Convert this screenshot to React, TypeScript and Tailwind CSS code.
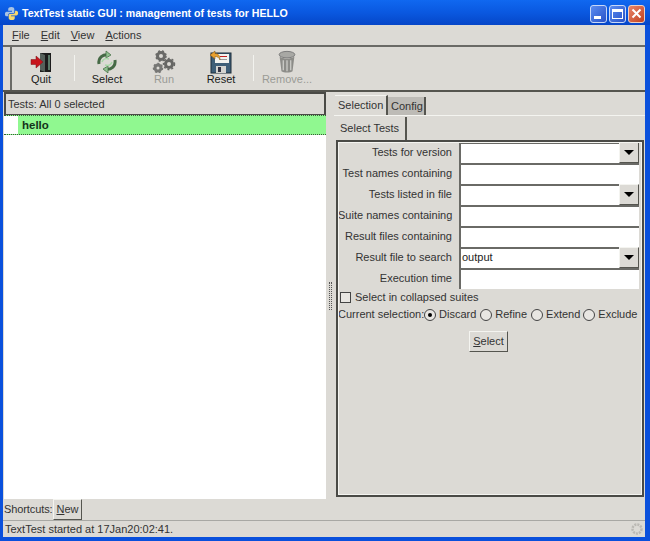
import type { ReactNode } from "react";

function Underlined({ first, rest }: { first: string; rest: string }) {
  return (
    <span>
      <span className="underline">{first}</span>
      {rest}
    </span>
  );
}

function PythonIcon() {
  return (
    <svg width="15" height="15" viewBox="0 0 16 16">
      <path d="M8 1C5 1 4.500 2 4.500 3.500V5H8.500V6H3C1.500 6 1 7 1 8.500S1.500 11 3 11H4.500V9.500C4.500 8.300 5.300 7.800 6.500 7.800H9.500C10.500 7.800 11 7.200 11 6.300V3.300C11 1.800 9.800 1 8 1Z" fill="#a9c4e4" />
      <path d="M8 15C11 15 11.500 14 11.500 12.500V11H7.500V10H13C14.500 10 15 9 15 7.500S14.500 5 13 5H11.800V6.500C11.800 7.800 10.800 8.600 9.500 8.600H6.500C5.500 8.600 5 9.200 5 10V12.700C5 14.200 6.200 15 8 15Z" fill="#f5d76e" />
    </svg>
  );
}

function WindowButtons() {
  return (
    <div className="flex gap-[2px] pr-[5px]">
      <div className="w-[17px] h-[18px] rounded-[3px] border border-[#c8d8f8] bg-gradient-to-br from-[#5b8cf0] to-[#2a52c8] flex items-end pl-[3px] pb-[3px]">
        <div className="w-[7px] h-[3px] bg-white" />
      </div>
      <div className="w-[17px] h-[18px] rounded-[3px] border border-[#c8d8f8] bg-gradient-to-br from-[#5b8cf0] to-[#2a52c8] flex items-center justify-center">
        <div className="w-[11px] h-[10px] border border-white border-t-[3px]" />
      </div>
      <div className="w-[17px] h-[18px] rounded-[3px] border border-[#f0d0c0] bg-gradient-to-br from-[#e88468] to-[#c2401c] flex items-center justify-center">
        <svg width="11" height="11" viewBox="0 0 11 11">
          <path d="M1.500 1.500L9.500 9.500M9.500 1.500L1.500 9.500" stroke="white" strokeWidth="2" />
        </svg>
      </div>
    </div>
  );
}

function QuitIcon() {
  return (
    <svg width="22" height="22" viewBox="0 0 22 22">
      <rect x="10" y="2" width="11" height="19" fill="#1c1c1c" />
      <path d="M10 2L15 4V21L10 19Z" fill="#55605a" />
      <rect x="18" y="4" width="2" height="15" fill="#5a7a68" />
      <path d="M1 8.500H6V5L13 11L6 17V13.500H1Z" fill="#c8141c" stroke="#7a1014" strokeWidth="0.5" />
    </svg>
  );
}

function SelectIcon() {
  return (
    <svg width="24" height="24" viewBox="0 0 24 24" fill="none">
      <path d="M4 14C3 8 8 3.500 14 5" stroke="#466a46" strokeWidth="3" />
      <path d="M11 1L16 5L11 8Z" fill="#8fbf8f" stroke="#3f6b3f" strokeWidth="0.7" />
      <path d="M20 10C21 16 16 20.500 10 19" stroke="#466a46" strokeWidth="3" />
      <path d="M13 23L8 19L13 16Z" fill="#8fbf8f" stroke="#3f6b3f" strokeWidth="0.7" />
      <path d="M7 12C8 9 11 8 14 9" stroke="#a8d8a8" strokeWidth="1.500" />
      <path d="M17 12C16 15 13 16 10 15" stroke="#a8d8a8" strokeWidth="1.500" />
    </svg>
  );
}

function RunIcon() {
  return (
    <svg width="24" height="24" viewBox="0 0 24 24" fill="none">
      <circle cx="9" cy="6" r="3.500" stroke="#6a6a68" strokeWidth="3" />
      <circle cx="9" cy="6" r="5" stroke="#6a6a68" strokeWidth="1.500" strokeDasharray="2 2" />
      <circle cx="17" cy="14" r="3.500" stroke="#666664" strokeWidth="3" />
      <circle cx="17" cy="14" r="5.500" stroke="#666664" strokeWidth="1.500" strokeDasharray="2 2" />
      <circle cx="6" cy="18" r="3" stroke="#777775" strokeWidth="3" />
      <circle cx="6" cy="18" r="4.500" stroke="#777775" strokeWidth="1.500" strokeDasharray="2 2" />
    </svg>
  );
}

function ResetIcon() {
  return (
    <svg width="24" height="24" viewBox="0 0 24 24">
      <rect x="2" y="3" width="20" height="20" fill="#3f5f78" stroke="#1c2c3a" />
      <rect x="6" y="4" width="14" height="9" fill="#f2f2ee" />
      <rect x="11" y="6" width="7" height="1" fill="#c02020" />
      <rect x="11" y="9" width="7" height="1" fill="#999" />
      <rect x="7" y="16" width="10" height="7" fill="#d4d4d0" />
      <rect x="9" y="17" width="3" height="5" fill="#334" />
      <path d="M1 5L6 1V3.500C9 3.500 11 5 11 10C10 7.500 8.500 6.500 6 6.500V9Z" fill="#e8a030" stroke="#7a5010" strokeWidth="0.5" />
    </svg>
  );
}

function RemoveIcon() {
  return (
    <svg width="22" height="24" viewBox="0 0 22 26">
      <ellipse cx="11" cy="5" rx="8.500" ry="3.500" fill="#a8a8a4" stroke="#777" />
      <path d="M3 7L5 23C7 25 15 25 17 23L19 7C15 10 7 10 3 7Z" fill="#8c8c88" />
      <path d="M7 11V22M11 11V23M15 11V22" stroke="#c8c8c4" strokeWidth="1.500" />
    </svg>
  );
}

function ToolButton({ icon, label, disabled, width }: { icon: ReactNode; label: string; disabled?: boolean; width: string }) {
  return (
    <div className={`flex flex-col items-center ${width}`}>
      <div className="h-[24px] flex items-center justify-center">{icon}</div>
      <div className={`-mt-[2px] leading-[14px] ${disabled ? "text-[#9a9a96]" : "text-[#1a1a1a]"}`}>{label}</div>
    </div>
  );
}

function Entry({ value, combo }: { value?: string; combo?: boolean }) {
  return (
    <div className="flex w-[180px] h-[21px]">
      <div className="flex-1 bg-white border-t-2 border-l-2 border-t-[#6a6a66] border-l-[#6a6a66] pl-[1px] leading-[17px]">{value}</div>
      {combo && (
        <div className="w-[20px] bg-[#dcdad5] border border-[#55554f] border-t-[#f4f4f0] border-l-[#f4f4f0] flex items-center justify-center">
          <div className="w-0 h-0 border-x-[5px] border-x-transparent border-t-[5px] border-t-black" />
        </div>
      )}
    </div>
  );
}

function Row({ label, value, combo }: { label: string; value?: string; combo?: boolean }) {
  return (
    <div className="flex items-center h-[21px]">
      <div className="w-[114px] text-right text-[#333] whitespace-nowrap">{label}</div>
      <div className="ml-[7px]">
        <Entry value={value} combo={combo} />
      </div>
    </div>
  );
}

function Radio({ label, on, gap }: { label: string; on?: boolean; gap: string }) {
  return (
    <div className={`flex items-center ${gap}`}>
      <div className="w-[12px] h-[12px] rounded-full border border-[#444] bg-[#e8e6e2] flex items-center justify-center">
        {on && <div className="w-[4px] h-[4px] rounded-full bg-black" />}
      </div>
      <span className="ml-[3px] text-[#333]">{label}</span>
    </div>
  );
}

export default function App() {
  return (
    <div className="w-[650px] h-[541px] flex flex-col bg-[#0a50dc] font-['Liberation_Sans',Arial,sans-serif] text-[11px] text-[#222] overflow-hidden">
      {/* title bar */}
      <div className="h-[25px] shrink-0 bg-gradient-to-b from-[#1068f0] via-[#0a58e0] to-[#0646c8] flex items-center justify-between pl-[4px] pt-[2px]">
        <div className="flex items-center gap-[3px]">
          <PythonIcon />
          <span className="text-white font-bold text-[10.6px]">TextTest static GUI : management of tests for HELLO</span>
        </div>
        <WindowButtons />
      </div>

      <div className="flex-1 min-h-0 ml-[3px] mb-[4px] mr-[5px] bg-[#dcdad5] flex flex-col">
        {/* menu */}
        <div className="h-[22px] shrink-0 flex items-center gap-[11px] pl-[9px] pt-[1px] border-b-2 border-[#6a6a66] text-[#333]">
          <Underlined first="F" rest="ile" />
          <Underlined first="E" rest="dit" />
          <Underlined first="V" rest="iew" />
          <Underlined first="A" rest="ctions" />
        </div>

        {/* toolbar */}
        <div className="h-[45px] shrink-0 flex items-center border-b-2 border-[#55554f]">
          <div className="w-[2px] h-full bg-[#6a6a66] ml-[7px]" />
          <div className="flex items-center h-full pb-[2px]">
            <ToolButton icon={<QuitIcon />} label="Quit" width="w-[56px] ml-[1px]" />
            <div className="w-[1px] h-[26px] bg-[#f2f2ee] ml-[5px] mr-[3px]" />
            <ToolButton icon={<SelectIcon />} label="Select" width="w-[58px]" />
            <ToolButton icon={<RunIcon />} label="Run" disabled width="w-[56px]" />
            <ToolButton icon={<ResetIcon />} label="Reset" width="w-[58px]" />
            <div className="w-[1px] h-[26px] bg-[#f2f2ee] ml-[3px] mr-[4px]" />
            <ToolButton icon={<RemoveIcon />} label="Remove..." disabled width="w-[52px] ml-[3px]" />
          </div>
        </div>

        {/* panes */}
        <div className="flex-1 min-h-0 flex">
          <div className="w-[323px] shrink-0 flex flex-col pl-[1px]">
            <div className="h-[23px] shrink-0 border-2 border-[#4a4a46] border-b flex items-center pl-[2px] text-[#333]">Tests: All 0 selected</div>
            <div className="flex-1 bg-white">
              <div className="h-[20px] flex bg-[#90f890] border-y border-dotted border-[#3a5a3a]">
                <div className="w-[14px] bg-white" />
                <div className="pl-[4px] font-bold text-[11.5px] text-[#14331a] leading-[18px]">hello</div>
              </div>
            </div>
          </div>

          {/* splitter grip */}
          <div className="w-[8px] shrink-0 flex items-center justify-center">
            <div className="w-[3px] h-[28px] border-x border-dotted border-[#555]" />
          </div>

          <div className="flex-1 min-w-0 flex flex-col pt-[3px]">
            {/* tabs */}
            <div className="h-[20px] shrink-0 flex items-end">
              <div className="h-[20px] w-[53px] ml-[1px] border-r-2 border-[#55554f] border-t border-t-[#f4f4f0] flex items-center pl-[3px] text-[#333]">Selection</div>
              <div className="h-[18px] w-[38px] bg-[#bdbbb6] border-r-2 border-[#55554f] flex items-center pl-[3px] text-[#333]">Config</div>
            </div>
            <div className="flex-1 min-h-0 flex flex-col border-t border-[#f4f4f0] pl-[2px] pr-[1px] pb-[2px]">
              <div className="h-[24px] shrink-0 flex">
                <div className="w-[70px] ml-[1px] mt-[1px] border-r-2 border-[#55554f] flex items-center pl-[3px] text-[#333]">Select Tests</div>
              </div>
              {/* form frame */}
              <div className="flex-1 min-h-0 border-2 border-[#4a4a46] outline outline-1 outline-[#f4f4f0] -outline-offset-[3px]">
                <Row label="Tests for version" combo />
                <Row label="Test names containing" />
                <Row label="Tests listed in file" combo />
                <Row label="Suite names containing" />
                <Row label="Result files containing" />
                <Row label="Result file to search" value="output" combo />
                <Row label="Execution time" />
                <div className="h-[17px] flex items-center pl-[2px]">
                  <div className="w-[11px] h-[11px] border border-[#444] bg-[#e8e6e2]" />
                  <span className="ml-[4px] text-[#333]">Select in collapsed suites</span>
                </div>
                <div className="h-[17px] flex items-center whitespace-nowrap text-[#333]">
                  <span className="w-[85px]">Current selection:</span>
                  <Radio label="Discard" on gap="ml-[1px]" />
                  <Radio label="Refine" gap="ml-[4px]" />
                  <Radio label="Extend" gap="ml-[4px]" />
                  <Radio label="Exclude" gap="ml-[3px]" />
                </div>
                <div className="flex justify-center mt-[8px] pr-[3px]">
                  <div className="w-[39px] h-[21px] border border-[#55554f] border-t-[#f4f4f0] border-l-[#f4f4f0] flex items-center justify-center text-[#333]">
                    <Underlined first="S" rest="elect" />
                  </div>
                </div>
              </div>
            </div>
          </div>
        </div>

        {/* shortcuts */}
        <div className="h-[22px] shrink-0 flex items-center border-b border-[#a8a8a4] text-[#333]">
          <span className="ml-[1px] w-[49px] whitespace-nowrap tracking-[-0.1px]">Shortcuts:</span>
          <div className="w-[29px] h-[21px] border border-[#55554f] border-t-[#f4f4f0] border-l-[#f4f4f0] flex items-center justify-center">
            <Underlined first="N" rest="ew" />
          </div>
        </div>

        {/* status bar */}
        <div className="h-[16px] shrink-0 flex items-center justify-between pl-[2px] text-[#333]">
          <span>TextTest started at 17Jan20:02:41.</span>
          <svg width="14" height="14" viewBox="0 0 14 14" className="mr-[1px]" fill="none">
            <circle cx="7" cy="7" r="4.500" stroke="#bbb9b4" strokeWidth="2.500" strokeDasharray="2 1" />
          </svg>
        </div>
      </div>
    </div>
  );
}
